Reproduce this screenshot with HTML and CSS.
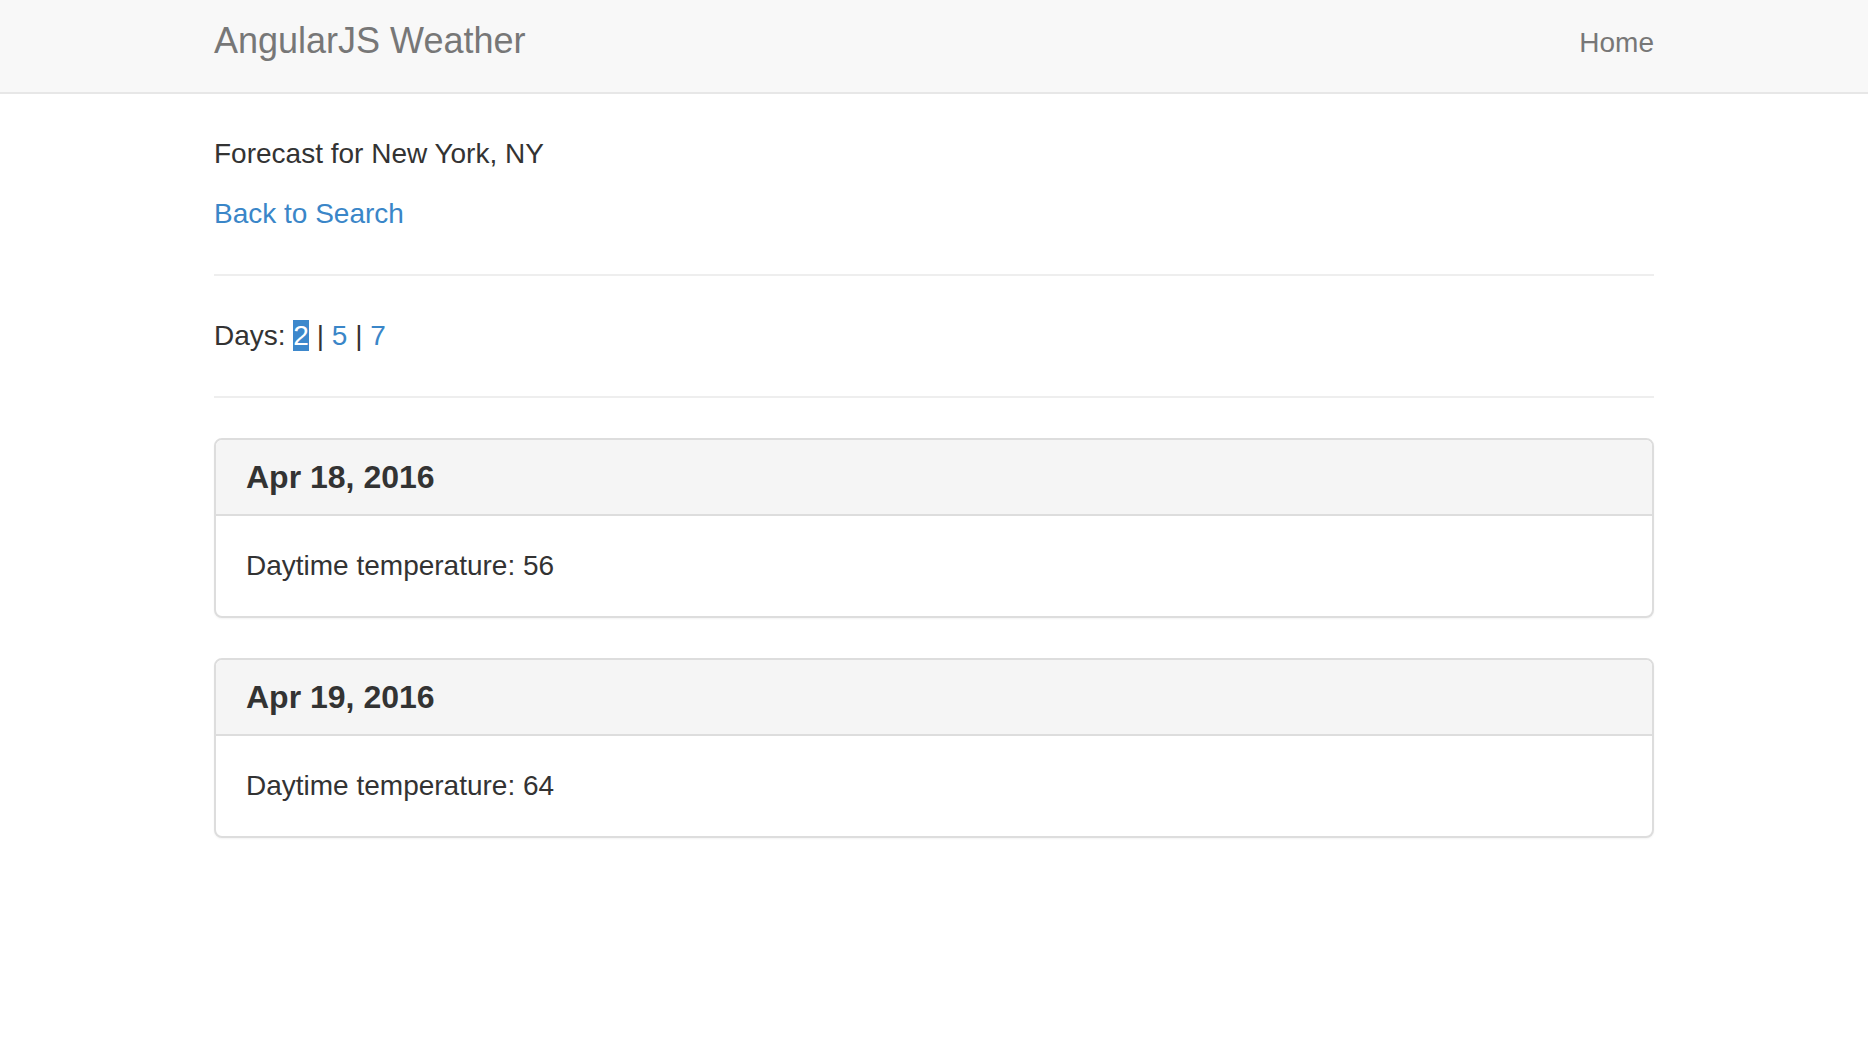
FILE: index.html
```html
<!DOCTYPE html>
<html lang="en">
<head>
<meta charset="utf-8">
<title>AngularJS Weather</title>
<link rel="stylesheet" href="styles.css">
</head>
<body>
<nav class="navbar">
  <div class="container navbar-inner">
    <a class="brand" href="#">AngularJS Weather</a>
    <ul class="nav">
      <li><a href="#">Home</a></li>
    </ul>
  </div>
</nav>
<main class="container">
  <p class="line">Forecast for New York, NY</p>
  <p class="line"><a class="link" href="#">Back to Search</a></p>
  <hr class="rule">
  <p class="line days">Days: <a class="link selected" href="#">2</a> | <a class="link" href="#">5</a> | <a class="link" href="#">7</a></p>
  <hr class="rule">
  <section class="panel">
    <div class="panel-heading"><h3 class="panel-title">Apr 18, 2016</h3></div>
    <div class="panel-body">Daytime temperature: 56</div>
  </section>
  <section class="panel">
    <div class="panel-heading"><h3 class="panel-title">Apr 19, 2016</h3></div>
    <div class="panel-body">Daytime temperature: 64</div>
  </section>
</main>
</body>
</html>
```
FILE: styles.css
```css
* { box-sizing: border-box; }
html, body { margin: 0; padding: 0; }
body {
  font-family: "Liberation Sans", Arial, sans-serif;
  font-size: 28px;
  line-height: 40px;
  color: #333;
  background: #fff;
}
.container {
  width: 1440px;
  margin: 0 auto;
}
.navbar {
  height: 94px;
  background: #f8f8f8;
  border-bottom: 2px solid #e7e7e7;
}
.navbar-inner {
  display: flex;
  justify-content: space-between;
  align-items: flex-start;
  height: 92px;
}
.brand {
  display: block;
  padding-top: 21px;
  font-size: 36px;
  line-height: 40px;
  color: #777;
  text-decoration: none;
}
.nav {
  list-style: none;
  margin: 0;
  padding: 0;
  display: flex;
}
.nav a {
  display: block;
  padding-top: 23px;
  font-size: 28px;
  line-height: 40px;
  color: #777;
  text-decoration: none;
}
main.container { padding-top: 40px; }
.line { margin: 0 0 20px; }
.link { color: #3a86c8; text-decoration: none; }
.selected { background: #3d88cc; color: #fff; }
.rule {
  margin: 40px 0;
  border: 0;
  border-top: 2px solid #eee;
  height: 0;
}
.panel {
  margin-bottom: 40px;
  border: 2px solid #ddd;
  border-radius: 8px;
  background: #fff;
  box-shadow: 0 1px 2px rgba(0,0,0,0.05);
}
.panel-heading {
  padding: 20px 30px;
  background: #f5f5f5;
  border-bottom: 2px solid #ddd;
  border-radius: 6px 6px 0 0;
}
.panel-title {
  margin: 0;
  font-size: 32px;
  line-height: 34px;
  font-weight: 700;
  color: #333;
}
.panel-body {
  padding: 30px;
}
```
